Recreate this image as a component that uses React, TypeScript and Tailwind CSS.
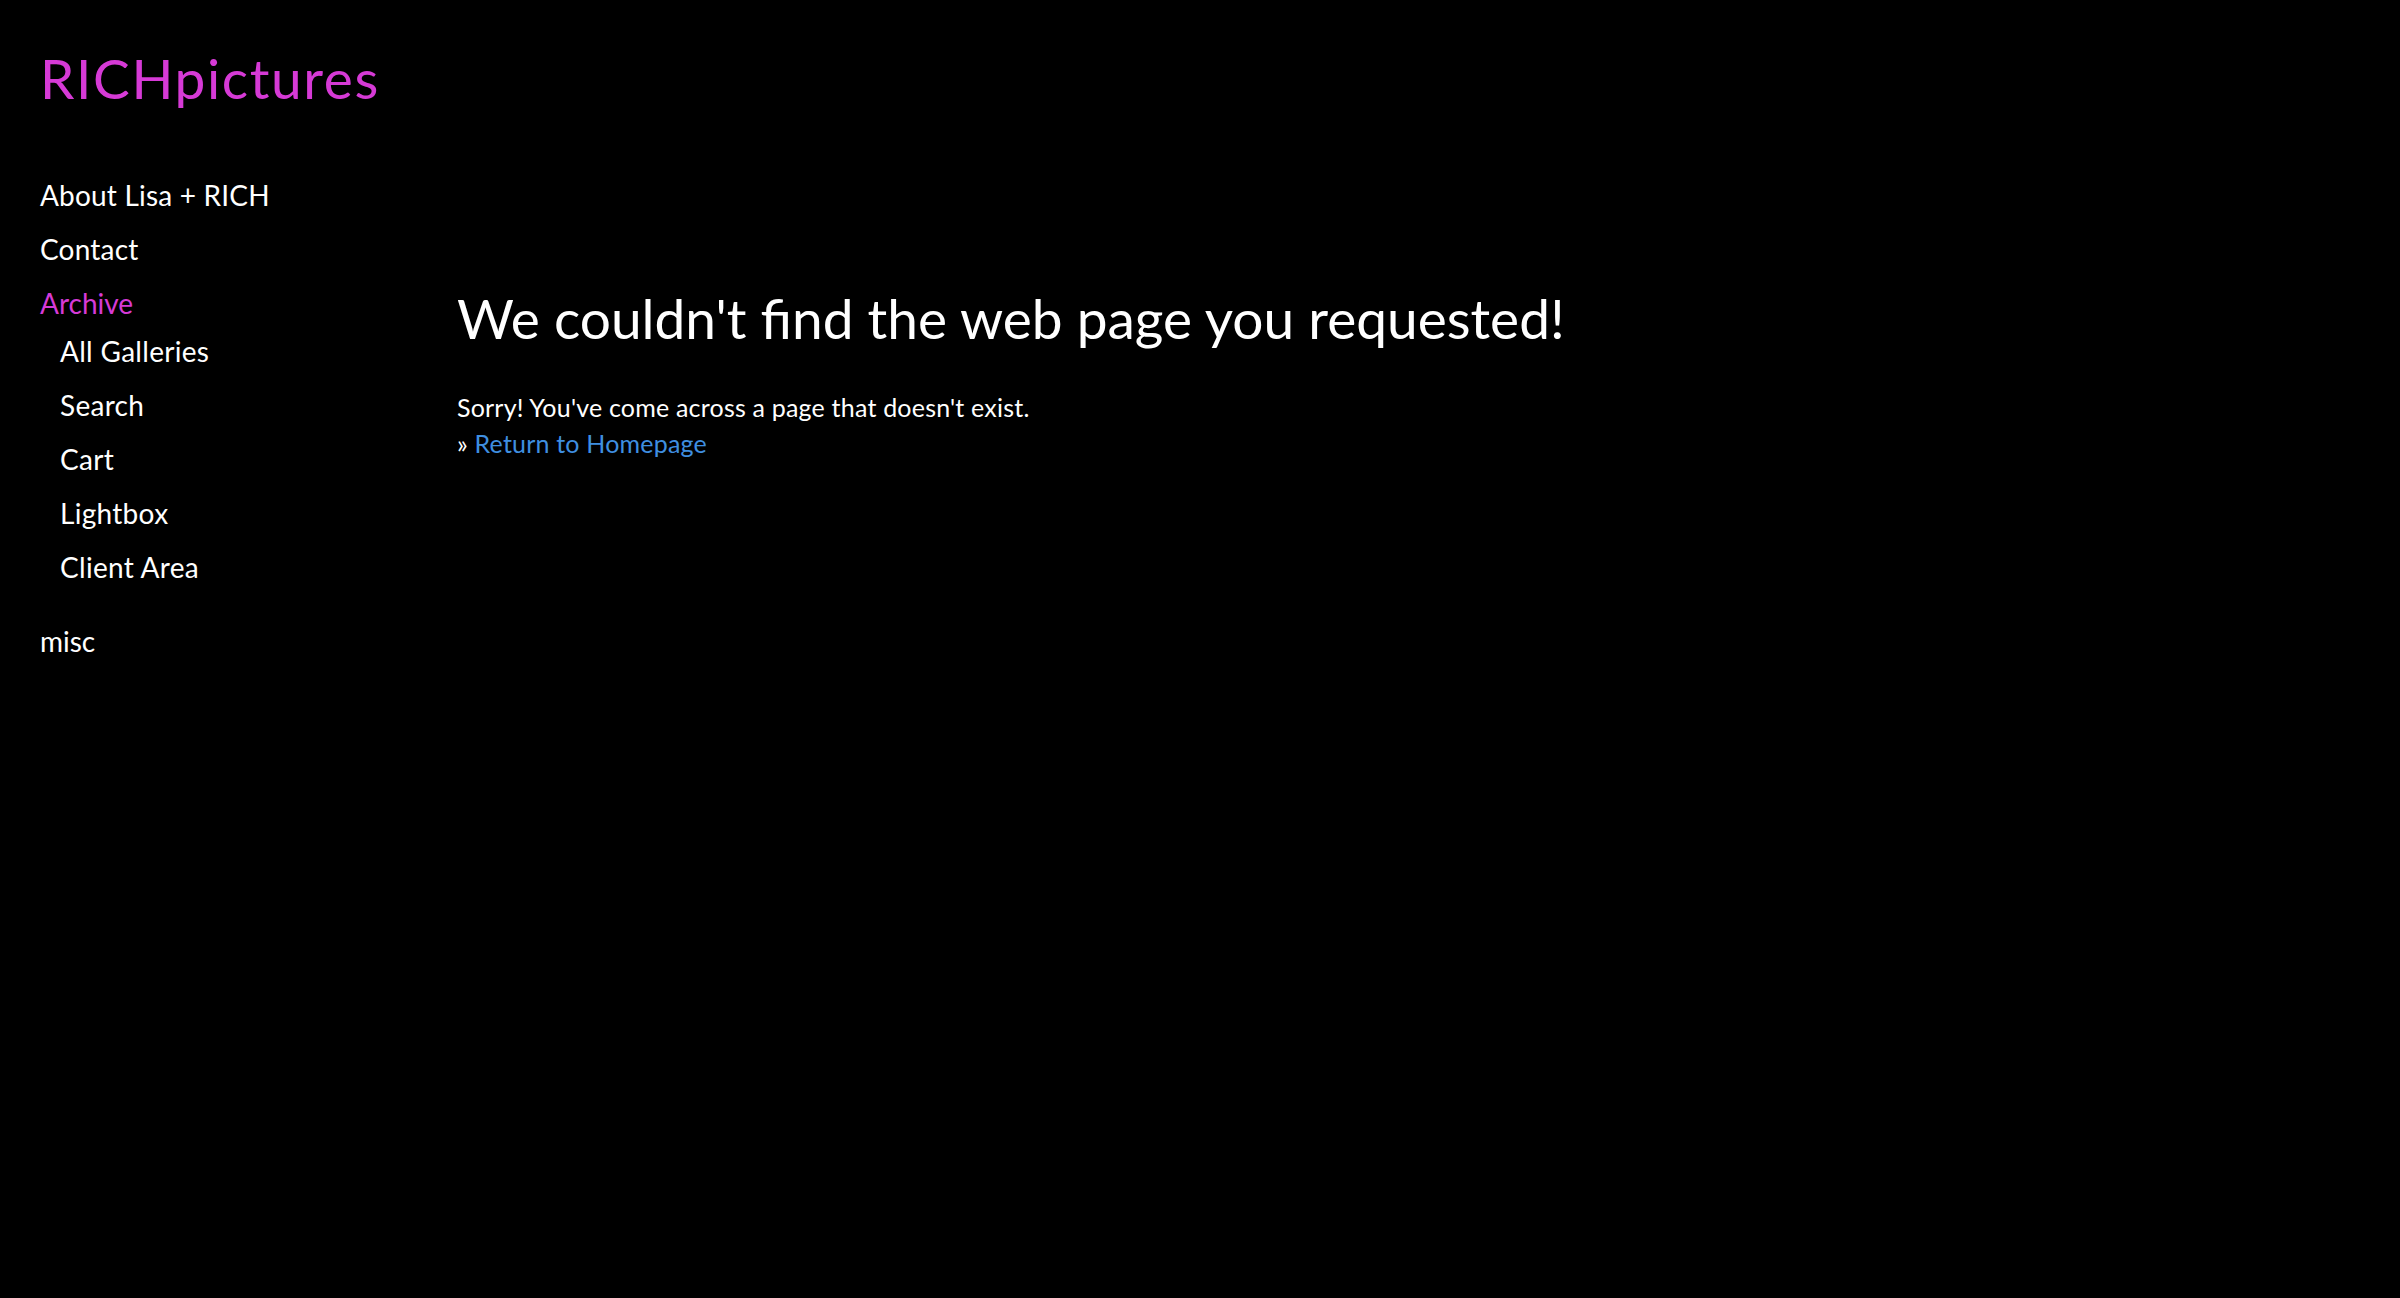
const NAV = ['About Lisa + RICH', 'Contact']
const SUB = ['All Galleries', 'Search', 'Cart', 'Lightbox', 'Client Area']

export default function App() {
  return (
    <div className="min-h-[1298px] w-full bg-black text-white font-['Lato','Open_Sans',sans-serif] flex">
      {/* Sidebar */}
      <aside className="w-[457px] shrink-0 pl-[40px] pt-[46px]">
        <div className="text-[55px] leading-[64px] text-[#d63ad6] tracking-[1.6px]">RICHpictures</div>
        <nav className="mt-[58px] text-[28px] leading-[54px]">
          {NAV.map(n => (
            <div key={n} className="tracking-[0.2px]">{n}</div>
          ))}
          <div className="text-[#d63ad6]">Archive</div>
          <div className="pl-[20px] -mt-[6px]">
            {SUB.map(s => (
              <div key={s} className="tracking-[0.3px]">{s}</div>
            ))}
          </div>
          <div className="mt-[20px]">misc</div>
        </nav>
      </aside>

      {/* Main */}
      <main className="pt-[280px]">
        <h1 className="text-[55px] leading-[76px]">We couldn't find the web page you requested!</h1>
        <p className="mt-[33px] text-[25px] leading-[36px] tracking-[0.2px]">
          Sorry! You've come across a page that doesn't exist.
          <br />
          » <a className="text-[#3f8fe0]">Return to Homepage</a>
        </p>
      </main>
    </div>
  )
}
